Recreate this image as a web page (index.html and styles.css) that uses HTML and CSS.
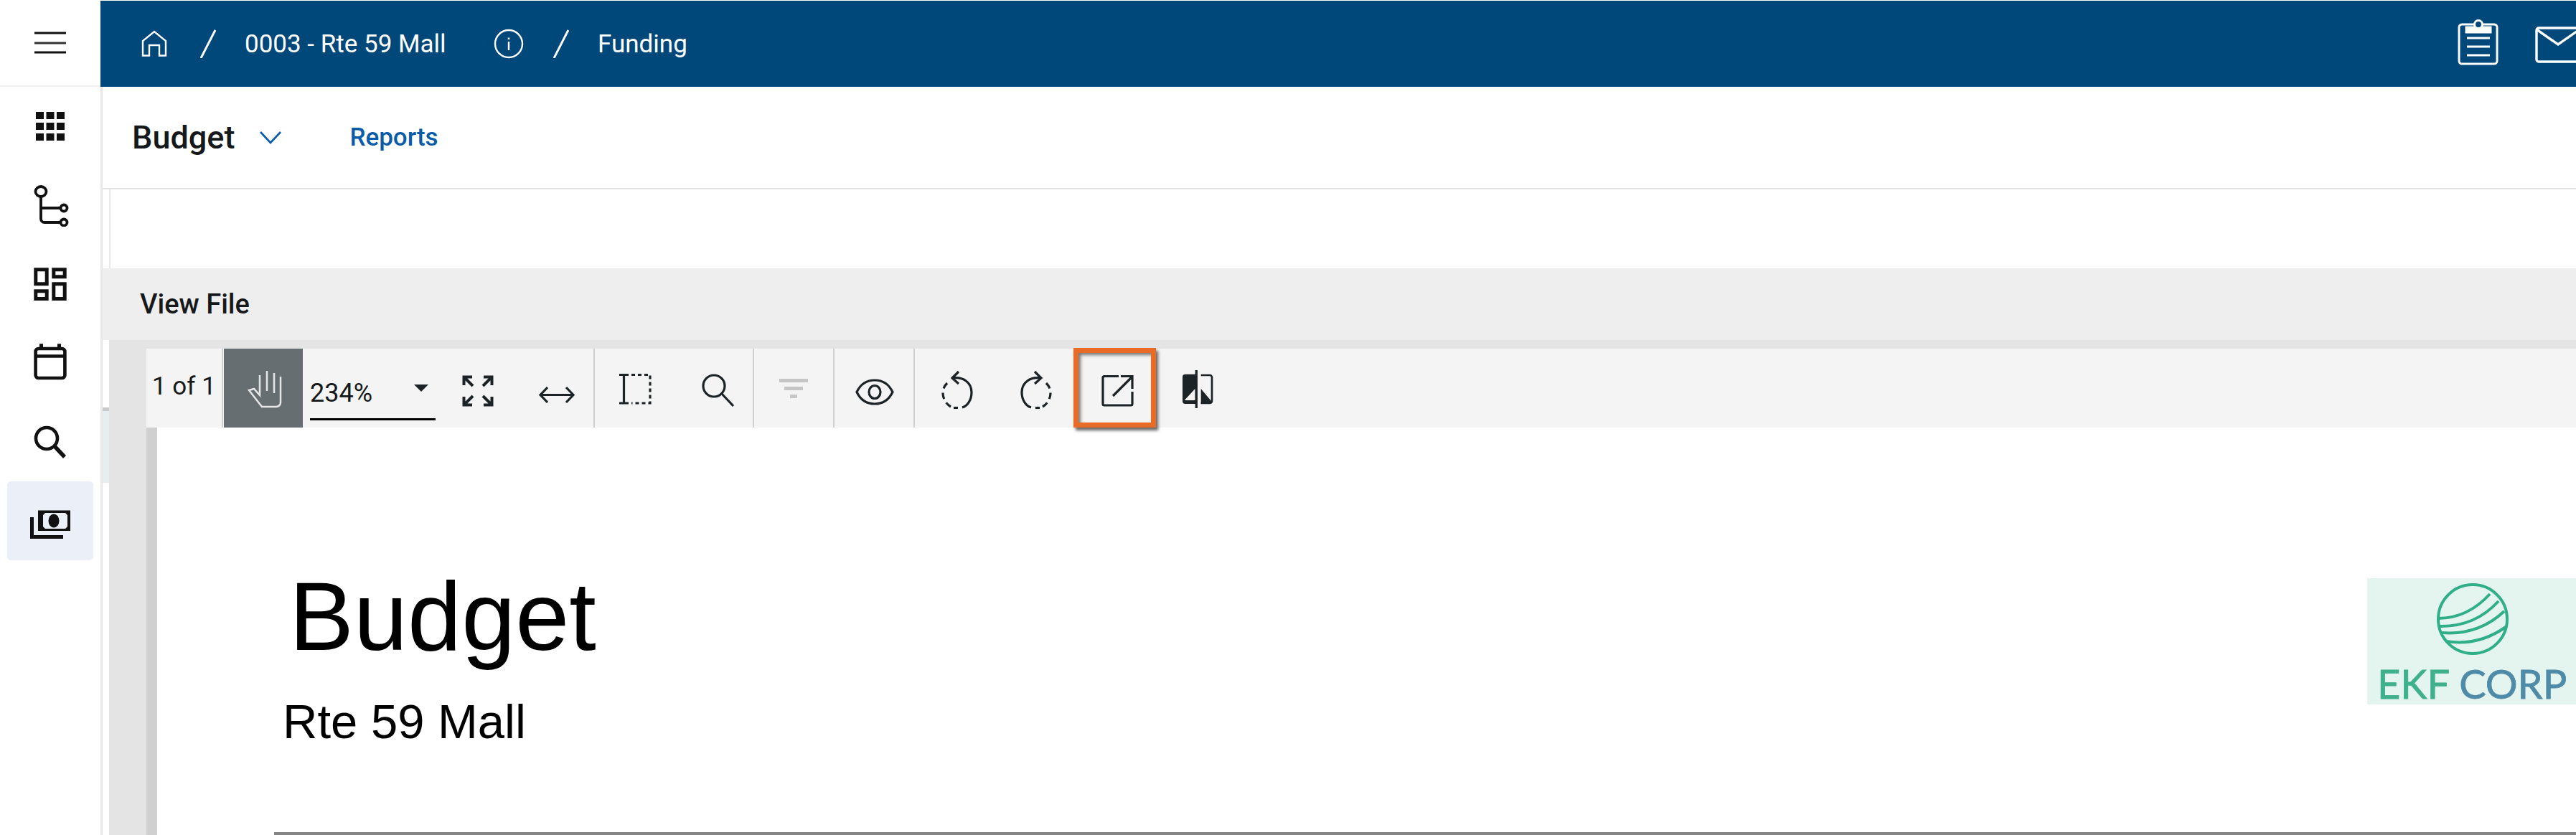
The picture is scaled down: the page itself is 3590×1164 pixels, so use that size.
FILE: index.html
```html
<!DOCTYPE html>
<html lang="en">
<head>
<meta charset="utf-8">
<title>Budget - View File</title>
<link rel="stylesheet" href="styles.css">
</head>
<body>
<div class="app">
  <aside class="sidebar">
    <div class="side-head">
      <svg class="ic60" viewBox="0 0 60 60"><path d="M8 16H52M8 43H52" stroke="#111" stroke-width="3" fill="none"/><path d="M8 30H52" stroke="#333" stroke-width="3" fill="none"/></svg>
    </div>
    <nav class="side-nav">
      <div class="side-item">
        <svg class="ic60" viewBox="0 0 60 60" fill="#111"><path d="M10 10h11v10H10zM24.500 10h11v10h-11zM39 10h11v10H39zM10 25h11v10H10zM24.500 25h11v10h-11zM39 25h11v10H39zM10 40h11v10H10zM24.500 40h11v10h-11zM39 40h11v10H39z"/></svg>
      </div>
      <div class="side-item">
        <svg class="ic60" viewBox="0 0 60 60" fill="none" stroke="#111" stroke-width="3.800"><ellipse cx="17" cy="11" rx="7.500" ry="7"/><path d="M17 18V49a5 5 0 0 0 5 5H44M17 34H44"/><circle cx="49" cy="34" r="4.500"/><circle cx="49" cy="54" r="4.500"/></svg>
      </div>
      <div class="side-item">
        <svg class="ic60" viewBox="0 0 60 60" fill="none" stroke="#111" stroke-width="5"><rect x="9.800" y="9.800" width="15.400" height="20"/><rect x="34.800" y="9.800" width="15.400" height="10"/><rect x="9.800" y="39.800" width="15.400" height="10.700"/><rect x="34.800" y="29.800" width="15.400" height="20.700"/></svg>
      </div>
      <div class="side-item">
        <svg class="ic60" viewBox="0 0 60 60" fill="none" stroke="#111" stroke-width="4.600"><rect x="9.600" y="10" width="40.800" height="41" rx="4"/><path d="M8 20.500H52"/><path d="M17.500 3.300V9M42.500 3.300V9" stroke-width="5"/></svg>
      </div>
      <div class="side-item">
        <svg class="ic60" viewBox="0 0 60 60" fill="none" stroke="#111"><circle cx="25" cy="25" r="15" stroke-width="4.600"/><path d="M36 36L50 51" stroke-width="5.500"/></svg>
      </div>
      <div class="side-item active">
        <svg class="ic60" viewBox="0 0 60 60" fill="#111"><path d="M13 15.500H58V44H13ZM20 22V38L23 41H51L54 38V22L51 19H23Z" fill-rule="evenodd"/><ellipse cx="35" cy="30" rx="7.500" ry="9.500"/><path d="M2 25H7V50H48V55H2Z"/></svg>
      </div>
    </nav>
  </aside>

  <main class="main">
    <header class="topbar">
      <svg class="home" viewBox="0 0 40 44" fill="none" stroke="#fff" stroke-width="2.400"><path d="M4 38.500V18L20 5L36 18V38.500H27V24H13V38.500Z"/></svg>
      <svg class="slash slash-a" viewBox="0 0 22 40"><path d="M1 40L21 1" stroke="#fff" stroke-width="3"/></svg>
      <span class="crumb crumb-a">0003 - Rte 59 Mall</span>
      <svg class="info" viewBox="0 0 42 42" fill="none" stroke="#fff" stroke-width="2.400"><circle cx="21" cy="21" r="19"/><path d="M21 18V30"/><path d="M21 12.500V15" stroke-width="2.600"/></svg>
      <svg class="slash slash-b" viewBox="0 0 22 40"><path d="M1 40L21 1" stroke="#fff" stroke-width="3"/></svg>
      <span class="crumb crumb-b">Funding</span>
      <svg class="clipboard" viewBox="0 0 60 66" fill="none" stroke="#fff" stroke-width="3"><rect x="3" y="8" width="53" height="55" rx="4"/><path d="M13 12H47V19H13Z" fill="#fff"/><circle cx="30" cy="8" r="5.500" fill="#00477a"/><path d="M14 27H46M14 39H46M14 51H46"/></svg>
      <svg class="mail" viewBox="0 0 57 52" fill="none" stroke="#fff" stroke-width="3.400"><rect x="2" y="3" width="90" height="47" rx="3"/><path d="M2 5L32 26L62 5"/></svg>
    </header>

    <div class="below">
      <div class="subnav">
        <span class="sub-title">Budget</span>
        <svg class="chev" viewBox="0 0 30 18" fill="none" stroke="#0a5ca8" stroke-width="2.600"><path d="M1 1L15 16L29 1"/></svg>
        <a class="sub-link">Reports</a>
      </div>
      <div class="blank"></div>
      <div class="file-head">View File</div>
      <div class="file-body">
        <div class="gutter">
          <div class="g-white"></div>
          <div class="g-tick"></div>
          <div class="g-tint"></div>
        </div>
        <div class="viewer">
          <div class="toolbar">
            <div class="pages">1 of 1</div>
            <div class="tdiv"></div>
            <div class="hand-btn">
              <svg class="ic60" viewBox="0 0 60 60" fill="none" stroke="#e6e6e6" stroke-width="2.500"><path d="M25 12V40L17 31L10 33L28 56H48a6 6 0 0 0 6-6V14"/><path d="M35 6V34M45 9V37"/></svg>
            </div>
            <div class="zoom-select"><span>234%</span><i class="caret"></i></div>
            <div class="tcell first">
              <svg class="ic60" viewBox="0 0 60 60" fill="none" stroke="#1c2326" stroke-width="4"><path d="M10.500 26V14.500H22M11 15L23 27M49.500 26V14.500H38M49 15L37 27M10.500 42V53.500H22M11 53L23 41M49.500 42V53.500H38M49 53L37 41"/></svg>
            </div>
            <div class="tcell second">
              <svg class="ic60" viewBox="0 0 60 60" fill="none" stroke="#1c2326" stroke-width="3.200"><path d="M8 39.500H52M17 29L7 39.500L17 50M43 29L53 39.500L43 50"/></svg>
            </div>
            <div class="tdiv"></div>
            <div class="tcell">
              <svg class="ic60" viewBox="0 0 60 60" fill="none" stroke="#1c2326" stroke-width="3.200"><path d="M9 11.500H22M15.500 11.500V51M9 51H22"/><path d="M26 11.500H52V51H26" stroke-dasharray="5 4"/></svg>
            </div>
            <div class="tcell">
              <svg class="ic60 nudge" viewBox="0 0 60 60" fill="none" stroke="#1c2326" stroke-width="3.200"><circle cx="27" cy="27" r="15"/><path d="M38 38L54 55"/></svg>
            </div>
            <div class="tdiv"></div>
            <div class="tcell">
              <svg class="ic60" viewBox="0 0 60 60" fill="#c6c6c6"><path d="M10 17H50V22H10ZM17 28H43V33H17ZM25 39H35V44H25Z"/></svg>
            </div>
            <div class="tdiv"></div>
            <div class="tcell">
              <svg class="ic60" viewBox="0 0 60 60" fill="none" stroke="#1c2326" stroke-width="3.200"><path d="M6 35.500C11 25 20 19 31 19S51 25 56 35.500C51 46 42 52 31 52S11 46 6 35.500Z"/><ellipse cx="31" cy="35.500" rx="8" ry="9"/></svg>
            </div>
            <div class="tdiv"></div>
            <div class="tcell wide">
              <svg class="ic60" viewBox="0 0 60 60" fill="none" stroke="#1c2326" stroke-width="3.200"><path d="M27 16C41 14 53 22 53 36C53 47 47 55 40 57M35 7L26 16L35 24"/><path d="M19 23C14 28 13 33 13 37C13 44 17 52 24 56" stroke-dasharray="9 6"/><path d="M28 57.500H34"/></svg>
            </div>
            <div class="tcell wide">
              <svg class="ic60" viewBox="0 0 60 60" fill="none" stroke="#1c2326" stroke-width="3.200"><path d="M37 16C23 14 11 22 11 36C11 47 17 55 24 57M29 7L38 16L29 24"/><path d="M45 23C50 28 51 33 51 37C51 44 47 52 40 56" stroke-dasharray="9 6"/><path d="M36 57.500H30"/></svg>
            </div>
            <div class="tcell wide marked">
              <svg class="ic60" viewBox="0 0 60 60" fill="none" stroke="#1c2326" stroke-width="3.200"><path d="M34 13.500H14a2 2 0 0 0-2 2V52a2 2 0 0 0 2 2H51a2 2 0 0 0 2-2V35"/><path d="M37 13.500H53V31M52 15L26 41"/></svg>
              <div class="callout"></div>
            </div>
            <div class="tcell wide">
              <svg class="ic60" viewBox="0 0 60 60"><path d="M15 10.700H29V52H15a4 4 0 0 1-4-4V14.700a4 4 0 0 1 4-4ZM13.700 47H28.700V30.700Z" fill="#1c2326" fill-rule="evenodd"/><path d="M36.700 12H49a3 3 0 0 1 3 3V48a3 3 0 0 1-3 3H36.700" fill="none" stroke="#1c2326" stroke-width="2.700"/><path d="M36.700 31L51 48V52H36.700Z" fill="#1c2326"/><path d="M30.300 5V58" stroke="#1c2326" stroke-width="3.300"/></svg>
            </div>
          </div>
          <div class="doc-row">
            <div class="doc-edge"></div>
            <div class="page">
              <div class="doc-head">
                <div class="doc-titles">
                  <div class="doc-title">Budget</div>
                  <div class="doc-sub">Rte 59 Mall</div>
                </div>
                <div class="logo">
                  <svg class="globe" viewBox="0 0 291 118" fill="none" stroke="#2fae87" stroke-width="4"><circle cx="147" cy="57" r="48"/><path d="M99 56Q140 56 171 22M101 67Q150 68 183 32M104 76Q155 80 191 46M110 88Q155 95 193 68"/></svg>
                  <div class="logo-text"><span class="ekf">EKF</span> <span class="corp">CORP</span></div>
                </div>
              </div>
              <div class="doc-rule"></div>
            </div>
          </div>
        </div>
      </div>
    </div>
  </main>
</div>
</body>
</html>
```
FILE: styles.css
```css
* { box-sizing: border-box; }
html, body { margin: 0; padding: 0; background: #fff; }
body { width: 3590px; height: 1164px; overflow: hidden; font-family: Roboto, "Liberation Sans", sans-serif; color: #16191b; }
.app { display: flex; width: 3590px; height: 1164px; }
svg { display: block; flex-shrink: 0; }
.ic60 { width: 60px; height: 60px; }

.sidebar { width: 140px; flex-shrink: 0; }
.side-head { height: 121px; border-bottom: 2px solid #eeeeee; display: flex; align-items: center; justify-content: center; }
.side-nav { display: flex; flex-direction: column; align-items: center; }
.side-item { width: 120px; height: 110px; display: flex; align-items: center; justify-content: center; }
.side-item.active { background: #ebeff7; border-radius: 5px; }

.main { flex: 1; min-width: 0; display: flex; flex-direction: column; }
.topbar { height: 120px; margin-top: 1px; background: #00477a; display: flex; align-items: center; color: #fff; overflow: hidden; flex-shrink: 0; }
.home { width: 40px; height: 44px; margin-left: 55px; }
.slash { width: 22px; height: 40px; }
.slash-a { margin-left: 44px; }
.crumb { font-size: 35px; white-space: nowrap; }
.crumb-a { margin-left: 40px; width: 347px; }
.info { width: 42px; height: 42px; }
.slash-b { margin-left: 41px; }
.crumb-b { margin-left: 40px; }
.clipboard { width: 60px; height: 66px; margin-left: auto; margin-top: -4px; }
.mail { width: 57px; height: 52px; margin-left: 49px; margin-top: 1px; }

.below { flex: 1; display: flex; flex-direction: column; border-left: 3px solid #e8e8e8; min-height: 0; }
.subnav { height: 143px; border-bottom: 2px solid #e4e4e4; display: flex; align-items: center; padding-left: 41px; flex-shrink: 0; }
.sub-title { font-size: 45px; font-weight: 500; color: #16191b; }
.chev { width: 30px; height: 18px; margin-left: 35px; }
.sub-link { font-size: 35px; font-weight: 500; color: #0a5ca8; margin-left: 95px; }
.blank { height: 110px; margin-left: 9px; border-left: 2px solid #e8e8e8; flex-shrink: 0; }
.file-head { height: 100px; background: #eeeeee; display: flex; align-items: center; padding-left: 52px; font-size: 38px; font-weight: 500; flex-shrink: 0; }

.file-body { flex: 1; display: flex; min-height: 0; }
.gutter { width: 9px; flex-shrink: 0; display: flex; flex-direction: column; }
.g-white { height: 94px; }
.g-tick { height: 5px; background: #c9c9c9; }
.g-tint { height: 100px; background: #e8edf2; }
.viewer { flex: 1; min-width: 0; background: #e4e4e4; padding: 12px 0 0 52px; display: flex; flex-direction: column; }

.toolbar { height: 110px; background: #f4f4f4; display: flex; align-items: center; flex-shrink: 0; }
.tdiv { width: 2px; height: 110px; background: #cfcfcf; flex-shrink: 0; }
.pages { width: 105px; padding-left: 8px; font-size: 35px; margin-top: -6px; white-space: nowrap; }
.hand-btn { width: 110px; height: 110px; margin-left: 1px; background: #676e71; display: flex; align-items: center; justify-content: center; flex-shrink: 0; }
.zoom-select { width: 175px; height: 110px; margin-left: 10px; position: relative; display: flex; align-items: center; font-size: 36px; flex-shrink: 0; }
.zoom-select::after { content: ""; position: absolute; left: 0; right: 0; top: 97px; height: 3px; background: #000; }
.zoom-select span { margin-top: 14px; }
.caret { position: absolute; left: 145px; top: 50px; border-left: 10px solid transparent; border-right: 10px solid transparent; border-top: 10px solid #1c2326; }
.tcell { width: 110px; height: 110px; display: flex; align-items: center; justify-content: center; flex-shrink: 0; }
.tcell.first { margin-left: 4px; }
.tcell.second { width: 106px; padding-left: 4px; }
.tcell.wide { width: 112px; }
.nudge { margin-left: 8px; }
.marked { position: relative; }
.callout { position: absolute; left: -3px; top: -1px; width: 115px; height: 111px; border: 7px solid #e86c25; box-shadow: 3px 4px 4px #666, inset 3px 3px 4px #777; }

.doc-row { flex: 1; display: flex; min-height: 0; }
.doc-edge { width: 15px; background: #d0d0d0; flex-shrink: 0; }
.page { flex: 1; min-width: 0; background: #fff; padding-top: 189px; overflow: hidden; font-family: "Liberation Sans", Arial, sans-serif; color: #000; }
.doc-head { display: flex; align-items: flex-start; height: 261px; }
.doc-titles { margin-left: 175px; }
.doc-title { font-size: 135px; line-height: 150px; margin-left: 9px; }
.doc-sub { font-size: 67px; line-height: 80px; margin-top: 31px; }
.logo { width: 291px; height: 176px; margin-left: auto; margin-top: 21px; background: #e4f4ef; filter: blur(0.7px); flex-shrink: 0; }
.globe { width: 291px; height: 118px; }
.logo-text { font-family: Lato, sans-serif; font-size: 56px; line-height: 58px; padding-left: 14px; white-space: nowrap; -webkit-text-stroke: 0.8px; }
.ekf { color: #3fb08c; }
.corp { color: #4e8ba8; }
.doc-rule { height: 4px; margin-left: 163px; margin-top: 114px; background: #858585; }
```
